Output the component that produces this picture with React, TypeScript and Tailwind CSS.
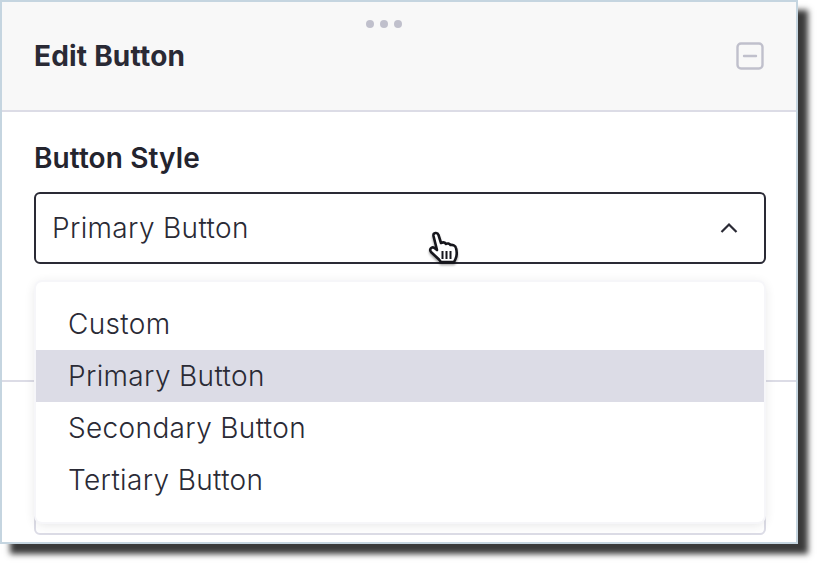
import React from "react";

const font = { fontFamily: "Inter, 'Liberation Sans', sans-serif" };

function HandCursor() {
  return (
    <svg className="absolute left-[426px] top-[226px] drop-shadow-[0_2px_1px_rgba(0,0,0,0.35)]" width="36" height="40" viewBox="0 0 36 40" fill="none">
      <path
        d="M5.500 8C5 4.500 9.500 4 10.500 7L13 15C15 14 17 14.500 18 16C19.500 15 21.500 15.500 22.500 17C24.500 16.500 27.500 17.500 28 20C29 24 29 28 27.500 31L26 34H13L11 31.500L3 24C1 21.500 3.500 18 6.500 20L9 22Z"
        fill="#fff"
        stroke="#16161c"
        strokeWidth="2.600"
        strokeLinejoin="round"
      />
      <path d="M14.500 23v8M18.500 23v8M22.500 23v8" stroke="#16161c" strokeWidth="2" />
    </svg>
  );
}

export default function App() {
  return (
    <div className="w-[818px] h-[564px] bg-white overflow-hidden" style={font}>
      <div className="relative w-[798px] h-[544px] bg-white border-2 border-[#c5d5e0] shadow-[10px_10px_6px_#3a3a3a]">
        <header className="relative h-[110px] bg-[#f8f8f8] border-b-2 border-[#dcdce6] flex items-start justify-between pl-[32px] pr-[32px]">
          <h1 className="mt-[37px] text-[28px] leading-[34px] font-bold tracking-[0.2px] text-[#2a2a35]">Edit Button</h1>
          <div className="absolute left-[364px] top-[18px] flex gap-[6px]">
            <span className="w-2 h-2 rounded-full bg-[#c0c0cc]" />
            <span className="w-2 h-2 rounded-full bg-[#c0c0cc]" />
            <span className="w-2 h-2 rounded-full bg-[#c0c0cc]" />
          </div>
          <svg className="mt-[40px]" width="28" height="28" viewBox="0 0 28 28" fill="none">
            <rect x="1.500" y="1.500" width="25" height="25" rx="3.500" stroke="#c0c0cc" strokeWidth="2.400" />
            <path d="M8 14h12" stroke="#c0c0cc" strokeWidth="2.400" strokeLinecap="round" />
          </svg>
        </header>

        <section className="h-[270px] pl-[32px] pr-[30px] pt-[29px] border-b-2 border-[#dcdce6]">
          <h2 className="text-[28px] leading-[34px] font-semibold tracking-[0.1px] text-[#24242e]">Button Style</h2>
          <div className="mt-[17px] h-[72px] rounded-[6px] border-2 border-[#2a2a35] bg-white flex items-center justify-between pl-[16px] pr-[25px]">
            <span className="text-[28px] font-light tracking-[0.35px] text-[#2a2a35]">Primary Button</span>
            <svg width="20" height="12" viewBox="0 0 20 12" fill="none">
              <path d="M2.500 10L10 2.500L17.500 10" stroke="#2a2a35" strokeWidth="2.200" />
            </svg>
          </div>
        </section>

        <div className="pl-[32px] pr-[30px] pt-[118px]">
          <div className="h-[35px] rounded-[6px] border-2 border-[#dcdce6]" />
        </div>

        <div className="absolute left-[34px] top-[280px] w-[728px] h-[240px] bg-white rounded-[6px] shadow-[0_0_0_2px_#f6f6f9,0_2px_12px_rgba(42,42,53,0.14)] py-[16px]">
          {["Custom", "Primary Button", "Secondary Button", "Tertiary Button"].map((item, i) => (
            <div
              key={item}
              className={`h-[52px] flex items-center pl-[32px] text-[28px] font-light tracking-[0.35px] text-[#2a2a35] ${i === 1 ? "bg-[#dcdce6]" : ""}`}
            >
              {item}
            </div>
          ))}
        </div>
        <HandCursor />
      </div>
    </div>
  );
}
